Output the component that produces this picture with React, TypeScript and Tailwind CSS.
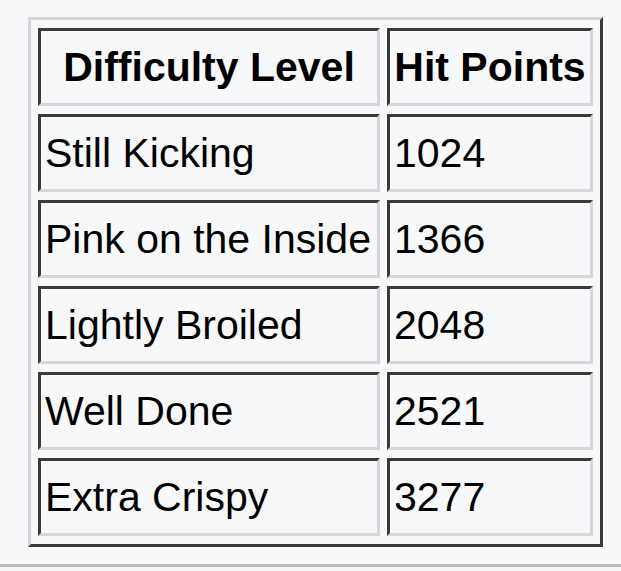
const rows = [
  { level: "Still Kicking", hp: "1024" },
  { level: "Pink on the Inside", hp: "1366" },
  { level: "Lightly Broiled", hp: "2048" },
  { level: "Well Done", hp: "2521" },
  { level: "Extra Crispy", hp: "3277" },
]

const cell =
  "h-[78px] border-[3px] border-t-[#3a3a3c] border-l-[#3a3a3c] border-b-[#d5d6d9] border-r-[#d5d6d9] px-[4px] align-middle"

const App = () => {
  return (
    <div className="w-[621px] h-[571px] bg-[#f7f8fa] overflow-hidden font-['Liberation_Sans',Arial,sans-serif] text-black">
      <div className="h-[567px] border-b-[3px] border-[#b9babe] pt-[17px] pl-[28px]">
        {/* table */}
        <table className="table-fixed w-[575px] border-separate border-spacing-x-[7px] border-spacing-y-[8px] border-[3px] border-t-[#d5d6d9] border-l-[#d5d6d9] border-b-[#3a3a3c] border-r-[#3a3a3c] text-[41px] leading-none">
          <colgroup>
            <col className="w-[342px]" />
            <col className="w-[206px]" />
          </colgroup>
          <thead>
            <tr>
              <th className={`${cell} font-bold text-center`}>Difficulty Level</th>
              <th className={`${cell} font-bold text-center whitespace-nowrap`}>Hit Points</th>
            </tr>
          </thead>
          <tbody>
            {rows.map((r) => (
              <tr key={r.level}>
                <td className={`${cell} whitespace-nowrap`}>{r.level}</td>
                <td className={cell}>{r.hp}</td>
              </tr>
            ))}
          </tbody>
        </table>
      </div>
    </div>
  )
}

export default App
